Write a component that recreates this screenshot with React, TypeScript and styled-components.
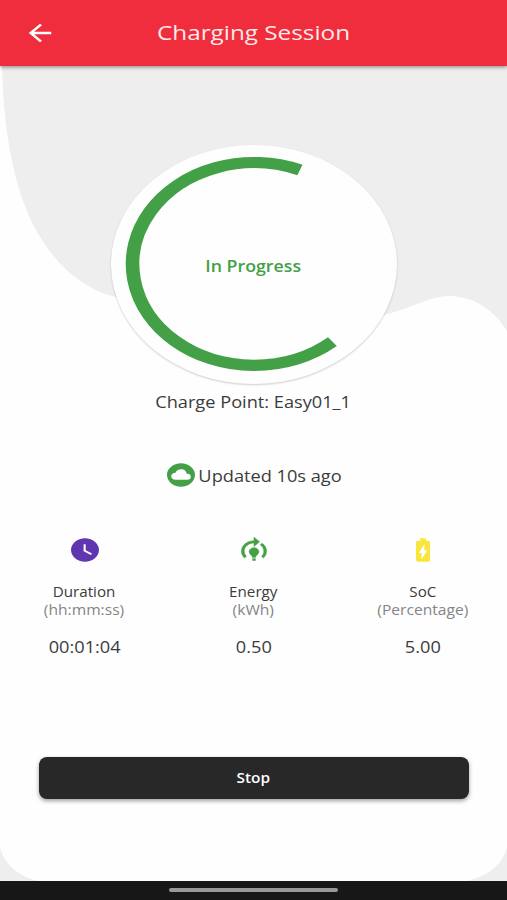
import React from 'react';
import styled, { createGlobalStyle } from 'styled-components';
import {
  MdArrowBack,
  MdBatteryChargingFull,
  MdCloudCircle,
  MdModelTraining,
  MdWatchLater,
} from 'react-icons/md';

const GlobalStyle = createGlobalStyle`
  * { box-sizing: border-box; }
  body {
    margin: 0;
    background: #fff;
    font-family: 'Open Sans', 'Noto Sans', sans-serif;
  }
`;

const Screen = styled.div`
  display: flex;
  flex-direction: column;
  width: 507px;
  height: 900px;
  overflow: hidden;
  background: #fefefe;
`;

const Header = styled.header`
  position: relative;
  z-index: 2;
  display: grid;
  grid-template-columns: 80px 1fr 80px;
  align-items: center;
  flex: none;
  height: 66px;
  background: #ef2d3c;
  color: #fff;
  box-shadow: 0 1px 4px rgba(0, 0, 0, 0.45);
`;

const BackButton = styled.button`
  display: flex;
  justify-content: center;
  padding: 0;
  border: 0;
  background: none;
  color: #fff;
`;

const WideIcon = styled.span<{ $color?: string; $bold?: boolean }>`
  display: flex;
  font-size: 28px;
  color: ${(p) => p.$color ?? 'inherit'};
  transform: scaleX(1.2);

  svg {
    stroke-width: ${(p) => (p.$bold ? 0.4 : 0)};
  }

  path[fill='none'] {
    stroke: none;
  }
`;

const Label = styled.span<{
  $size: number;
  $line: number;
  $color?: string;
  $weight?: number;
  $stretch?: number;
}>`
  display: block;
  font-size: ${(p) => p.$size}px;
  line-height: ${(p) => p.$line}px;
  font-weight: ${(p) => p.$weight ?? 400};
  color: ${(p) => p.$color ?? '#3b3b3b'};
  white-space: nowrap;
  text-align: center;
  transform: scaleX(${(p) => p.$stretch ?? 1.137});
`;

const TitleBox = styled.div`
  padding-bottom: 2px;
`;

const Content = styled.main`
  position: relative;
  z-index: 0;
  display: flex;
  flex-direction: column;
  align-items: center;
  height: 815px;
  padding-top: 79px;
`;

const Backdrop = styled.svg`
  position: absolute;
  inset: 0;
  z-index: -1;
`;

const Gauge = styled.section`
  display: grid;
  place-items: center;
  width: 286px;
  height: 239px;
  border-radius: 50%;
  background: #fefefe;
  box-shadow: 0 1px 2px rgba(0, 0, 0, 0.2);

  > * {
    grid-area: 1 / 1;
  }
`;

const GaugeText = styled.div`
  padding-top: 3px;
`;

const PointName = styled.div`
  margin-top: 7px;
`;

const Status = styled.div`
  display: flex;
  align-items: center;
  gap: 12px;
  height: 28px;
  margin-top: 48px;
  padding-right: 7px;
`;

const StatusText = styled.div`
  padding-top: 2px;
`;

const Metrics = styled.section`
  display: grid;
  grid-template-columns: repeat(3, 1fr);
  width: 100%;
  margin-top: 47px;
`;

const Metric = styled.div`
  display: flex;
  flex-direction: column;
  align-items: center;
`;

const MetricText = styled.div`
  margin: 19px 0 17px;
`;

const StopButton = styled.button`
  display: flex;
  align-items: center;
  justify-content: center;
  width: 430px;
  height: 42px;
  margin-top: 99px;
  padding: 0;
  border: 0;
  border-radius: 8px;
  background: #282828;
  box-shadow: 0 2px 4px rgba(0, 0, 0, 0.38);
  font-family: inherit;
`;

const NavBar = styled.footer`
  display: flex;
  justify-content: center;
  align-items: center;
  height: 19px;
  background: #171717;
`;

const Handle = styled.div`
  width: 169px;
  height: 4px;
  margin-bottom: 1px;
  border-radius: 2px;
  background: #999;
`;

const metrics = [
  { name: 'Duration', unit: '(hh:mm:ss)', value: '00:01:04', color: '#5f35b0', Icon: MdWatchLater, bold: false },
  { name: 'Energy', unit: '(kWh)', value: '0.50', color: '#43a047', Icon: MdModelTraining, bold: true },
  { name: 'SoC', unit: '(Percentage)', value: '5.00', color: '#f8e63f', Icon: MdBatteryChargingFull, bold: false },
];

export default function App() {
  return (
    <>
      <GlobalStyle />
      <Screen>
        <Header>
          <BackButton aria-label="Back">
            <WideIcon>
              <MdArrowBack />
            </WideIcon>
          </BackButton>
          <TitleBox>
            <Label $size={20.5} $line={28} $color="#ffe9e9" $stretch={1.185}>
              Charging Session
            </Label>
          </TitleBox>
        </Header>
        <Content>
          <Backdrop width="507" height="815" viewBox="0 66 507 815" aria-hidden="true">
            <path
              d="M2 66C4 145 18 203 42 240C61 270 86 289 112 296C180 315 300 335 387 314C415 307 430 296 450 296C475 297 494 310 507 331V66Z"
              fill="#eee"
            />
            <path d="M0 847C4 864 18 876 38 881H0ZM507 847C503 864 489 876 467 881H507Z" fill="#eee" />
          </Backdrop>
          <Gauge>
            <svg width="286" height="239" viewBox="-143 -119.5 286 239" aria-hidden="true">
              <g transform="translate(0.3 -0.5) scale(1.2 1)">
                <path
                  d="M38 -94A101.4 101.4 0 1 0 65.1 77.7"
                  fill="none"
                  stroke="#43a047"
                  strokeWidth="11.4"
                />
              </g>
            </svg>
            <GaugeText>
              <Label $size={16} $line={22} $weight={600} $color="#43a047" $stretch={1.11}>
                In Progress
              </Label>
            </GaugeText>
          </Gauge>
          <PointName>
            <Label $size={16} $line={22}>
              Charge Point: Easy01_1
            </Label>
          </PointName>
          <Status>
            <WideIcon $color="#43a047">
              <MdCloudCircle />
            </WideIcon>
            <StatusText>
              <Label $size={16} $line={22}>
                Updated 10s ago
              </Label>
            </StatusText>
          </Status>
          <Metrics>
            {metrics.map(({ name, unit, value, color, Icon, bold }) => (
              <Metric key={name}>
                <WideIcon $color={color} $bold={bold}>
                  <Icon />
                </WideIcon>
                <MetricText>
                  <Label $size={14} $line={18} $stretch={1.085}>
                    {name}
                  </Label>
                  <Label $size={14} $line={18} $color="#858585" $stretch={1.115}>
                    {unit}
                  </Label>
                </MetricText>
                <Label $size={16} $line={22}>
                  {value}
                </Label>
              </Metric>
            ))}
          </Metrics>
          <StopButton>
            <Label $size={14} $line={20} $weight={600} $color="#fff" $stretch={1.1}>
              Stop
            </Label>
          </StopButton>
        </Content>
        <NavBar>
          <Handle />
        </NavBar>
      </Screen>
    </>
  );
}
